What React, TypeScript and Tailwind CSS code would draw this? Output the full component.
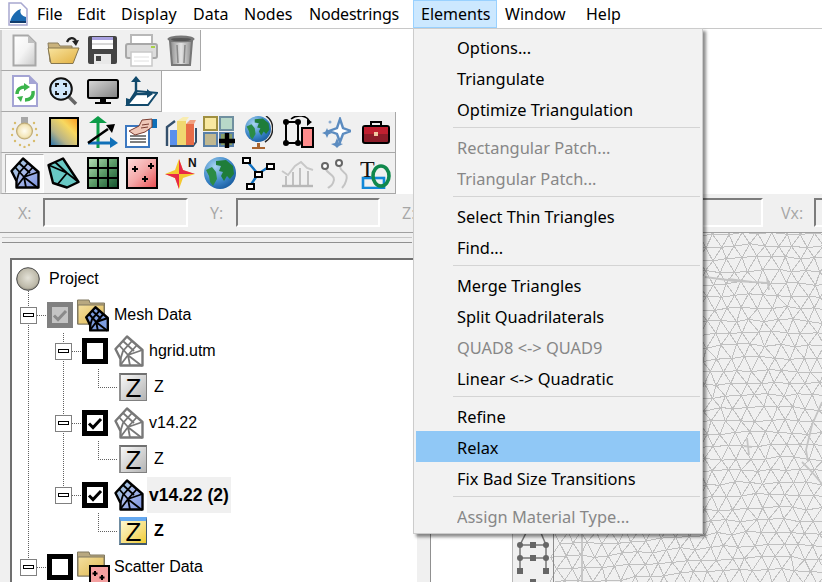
import { useMemo } from "react";
import type { ReactNode } from "react";

const menuBar = [
  { label: "File", w: "w-[40px]", track: "" },
  { label: "Edit", w: "w-[44px]", track: "" },
  { label: "Display", w: "w-[72px]", track: "tracking-[0.2px]" },
  { label: "Data", w: "w-[51px]", track: "" },
  { label: "Nodes", w: "w-[65px]", track: "" },
  { label: "Nodestrings", w: "w-[112px]", track: "tracking-[-0.2px]" },
];

type MenuEntry = { label?: string; disabled?: boolean; active?: boolean; sep?: boolean };

const elementsMenu: MenuEntry[] = [
  { label: "Options..." },
  { label: "Triangulate" },
  { label: "Optimize Triangulation" },
  { sep: true },
  { label: "Rectangular Patch...", disabled: true },
  { label: "Triangular Patch...", disabled: true },
  { sep: true },
  { label: "Select Thin Triangles" },
  { label: "Find..." },
  { sep: true },
  { label: "Merge Triangles" },
  { label: "Split Quadrilaterals" },
  { label: "QUAD8 <-> QUAD9", disabled: true },
  { label: "Linear <-> Quadratic" },
  { sep: true },
  { label: "Refine" },
  { label: "Relax", active: true },
  { label: "Fix Bad Size Transitions" },
  { sep: true },
  { label: "Assign Material Type...", disabled: true },
];

function Icon({ w, h, children }: { w: number; h: number; children: ReactNode }) {
  return (
    <svg width={w} height={h} viewBox={`0 0 ${w} ${h}`} className="block shrink-0">
      {children}
    </svg>
  );
}

function Grad({ id, stops, dir = "v" }: { id: string; stops: string[]; dir?: "v" | "h" | "d" | "u" }) {
  const c = { v: [0, 0, 0, 1], h: [0, 0, 1, 0], d: [0, 0, 1, 1], u: [0, 1, 1, 0] }[dir];
  return (
    <linearGradient id={id} x1={c[0]} y1={c[1]} x2={c[2]} y2={c[3]}>
      {stops.map((s, i) => (
        <stop key={i} offset={i / (stops.length - 1)} stopColor={s} />
      ))}
    </linearGradient>
  );
}

function MeshPaths({ fill, stroke, sw }: { fill: string; stroke: string; sw: number }) {
  return (
    <>
      <path d="M1.500 14L13 1.500 28.500 15V30.500H6.500V24Z" fill={fill} stroke={stroke} strokeWidth={sw} strokeLinejoin="round" />
      <path
        d="M9 6L20 16M5 10L14 20M18 6L9 16 6.500 24M23 10L14 20 6.500 30M14 20L16 30.500M14 20L28.500 15M15 21L28 31"
        fill="none"
        stroke={stroke}
        strokeWidth={sw - 0.6}
      />
    </>
  );
}

function MeshShape({ id, stroke, stops, sw = 2.4 }: { id: string; stroke: string; stops: string[]; sw?: number }) {
  return (
    <Icon w={30} h={32}>
      <defs>
        <Grad id={id} stops={stops} dir="d" />
      </defs>
      <MeshPaths fill={`url(#${id})`} stroke={stroke} sw={sw} />
    </Icon>
  );
}

function GlobeBall({ id, r }: { id: string; r: number }) {
  return (
    <g transform={`scale(${r / 16})`}>
      <defs>
        <radialGradient id={id} cx="0.35" cy="0.3" r="0.8">
          <stop offset="0" stopColor="#a8d4f0" />
          <stop offset="0.6" stopColor="#3c86c8" />
          <stop offset="1" stopColor="#14569a" />
        </radialGradient>
      </defs>
      <circle cx="16" cy="16" r="16" fill={`url(#${id})`} />
      <path d="M12 4L22 3 29 9 30 17 26 22 23 19 20 24 17 19 19 15 15 14 17 9 12 8Z" fill="#1f7d3a" />
      <path d="M2 13L8 10 12 15 13 22 9 29 6 25 5 19Z" fill="#2b8c46" />
    </g>
  );
}

const icons: Record<string, ReactNode> = {
  new: (
    <Icon w={25} h={33}>
      <defs>
        <Grad id="nw" stops={["#ffffff", "#f4f4f4", "#c8c8c8"]} dir="d" />
      </defs>
      <path d="M1.500 1.500H16L23.500 9V31.500H1.500Z" fill="url(#nw)" stroke="#a8a8a8" strokeWidth="2" />
      <path d="M16 1.500V9H23.500Z" fill="#c0c0c0" />
    </Icon>
  ),
  open: (
    <Icon w={33} h={30}>
      <defs>
        <Grad id="op" stops={["#f8e4a0", "#e2b040"]} dir="d" />
      </defs>
      <path d="M1 8H11L13 11H25V27H3Z" fill="#c9b27c" stroke="#8a7c5c" />
      <path d="M1 13H32L26 28.500H4Z" fill="url(#op)" stroke="#85764f" />
      <path d="M20 7C22 2 27 2 29 6" fill="none" stroke="#222" strokeWidth="2.200" />
      <path d="M25 6L32 5 29 11Z" fill="#222" />
    </Icon>
  ),
  save: (
    <Icon w={29} h={29}>
      <rect x="0" y="0" width="29" height="28" rx="2" fill="#444" />
      <rect x="4" y="1" width="21" height="12" fill="#fff" />
      <rect x="4" y="1" width="21" height="3" fill="#a8a0e0" />
      <rect x="4" y="7" width="21" height="2" fill="#d8d8d8" />
      <rect x="6" y="18" width="17" height="10" fill="#e8e8e8" />
      <rect x="8" y="20" width="5" height="5" fill="#444" />
    </Icon>
  ),
  print: (
    <Icon w={33} h={33}>
      <rect x="6" y="1" width="21" height="10" fill="#fff" stroke="#b8b8b8" strokeWidth="2" />
      <rect x="1" y="10" width="31" height="14" rx="2" fill="#dcdcdc" stroke="#a8a8a8" strokeWidth="2" />
      <rect x="26" y="12" width="4" height="2" fill="#a8d048" />
      <rect x="6" y="18" width="21" height="14" fill="#fff" stroke="#c8c8c8" strokeWidth="1.500" />
      <path d="M9 23H24M9 27H24" stroke="#e0e0e0" />
    </Icon>
  ),
  trash: (
    <Icon w={28} h={33}>
      <defs>
        <Grad id="tr" stops={["#8a8a8a", "#e4e4e4", "#8c8c8c"]} dir="h" />
      </defs>
      <path d="M3 7H25L23 31H5Z" fill="url(#tr)" stroke="#777" strokeWidth="2" />
      <ellipse cx="14" cy="5" rx="13.500" ry="3.500" fill="#777" />
      <ellipse cx="14" cy="5.500" rx="10" ry="1.600" fill="#555" />
      <path d="M10 11L11 29M18 11L17 29" stroke="#888" strokeWidth="1.500" />
    </Icon>
  ),
  refresh: (
    <Icon w={26} h={32}>
      <path d="M1 1H17L25 9V31H1Z" fill="#fff" stroke="#a4a4d4" strokeWidth="2" />
      <path d="M17 1V9H25Z" fill="#a4a4d4" />
      <path d="M5 19C5 14 9 12 13 12" fill="none" stroke="#3cb44c" strokeWidth="3.400" />
      <path d="M12 8L18 12 12 16Z" fill="#3cb44c" />
      <path d="M21 16C22 22 18 25 13 25" fill="none" stroke="#3cb44c" strokeWidth="3.400" />
      <path d="M9 27L5 22 11 21Z" fill="#3cb44c" />
    </Icon>
  ),
  zoom: (
    <Icon w={29} h={29}>
      <path d="M19 19L27 27" stroke="#666" strokeWidth="3.600" />
      <circle cx="12" cy="12" r="10.800" fill="#cfe6fb" stroke="#111" strokeWidth="2" />
      <path d="M7 10V7H10M14 7H17V10M17 14V17H14M10 17H7V14" fill="none" stroke="#111" strokeWidth="1.800" />
    </Icon>
  ),
  monitor: (
    <Icon w={32} h={25}>
      <defs>
        <Grad id="mo" stops={["#d8d8d8", "#808080"]} dir="d" />
      </defs>
      <rect x="1" y="1" width="30" height="18" rx="1.500" fill="url(#mo)" stroke="#000" strokeWidth="2" />
      <rect x="13" y="20" width="6" height="3" fill="#000" />
      <rect x="8" y="23" width="16" height="2" fill="#000" />
    </Icon>
  ),
  plane: (
    <Icon w={33} h={31}>
      <path d="M11 15L32 17 23 29 2 29Z" fill="#fff" stroke="#124a6c" strokeWidth="2" />
      <path d="M11 3V18L2 29" fill="none" stroke="#124a6c" strokeWidth="2.400" />
      <path d="M11 18H24" stroke="#124a6c" strokeWidth="2.400" />
      <path d="M6 6L11 0 16 6ZM22 13L28 18 22 22ZM1 22L7 24 1 30Z" fill="#124a6c" />
    </Icon>
  ),
  bulb: (
    <Icon w={27} h={31}>
      <defs>
        <radialGradient id="bl" cx="0.5" cy="0.5" r="0.55">
          <stop offset="0" stopColor="#fffdf2" />
          <stop offset="0.7" stopColor="#f4e6b8" />
          <stop offset="1" stopColor="#b8a878" />
        </radialGradient>
      </defs>
      <rect x="10" y="0" width="7" height="7" fill="#a8a8a8" />
      <circle cx="13.500" cy="14" r="8" fill="url(#bl)" stroke="#c0aa70" />
      {[
        [2, 12], [25, 12], [1, 18], [26, 18], [4, 6], [23, 6], [4, 24], [23, 24], [9, 28], [18, 28], [13.5, 30],
      ].map(([x, y], i) => (
        <circle key={i} cx={x} cy={y} r="1.200" fill="#d8bc6c" />
      ))}
    </Icon>
  ),
  gradient: (
    <Icon w={30} h={30}>
      <defs>
        <Grad id="gr" stops={["#1f6fb0", "#b8b488", "#f8d860", "#f8981c"]} dir="u" />
      </defs>
      <rect x="1" y="1" width="28" height="28" fill="url(#gr)" stroke="#000" strokeWidth="2" />
    </Icon>
  ),
  axes: (
    <Icon w={31} h={32}>
      <path d="M11 6V32" stroke="#0c9c48" strokeWidth="3" />
      <path d="M2 7L11 0 20 7Z" fill="#0c9c48" />
      <path d="M1 27H24" stroke="#1070b8" strokeWidth="3" />
      <path d="M23 21L31 27 23 32Z" fill="#1070b8" />
      <path d="M1 27L21 13" stroke="#000" strokeWidth="2.600" />
      <path d="M19 9L28 8 25 17Z" fill="#000" />
    </Icon>
  ),
  form: (
    <Icon w={33} h={31}>
      <rect x="1" y="9" width="23" height="21" fill="#fff" stroke="#3c78c0" strokeWidth="2" />
      <path d="M5 19H21M5 22H21M5 25H21" stroke="#555" strokeWidth="1.600" />
      <rect x="27" y="2" width="5" height="9" fill="#1070b8" />
      <path d="M4 14L14 9 17 3 27 2 27 10 20 15 10 18Z" fill="#f0c8b8" stroke="#7a3c30" />
      <path d="M17 8L24 7M16 11L23 10" stroke="#7a3c30" />
    </Icon>
  ),
  bars: (
    <Icon w={33} h={32}>
      <path d="M3 30V11L11 5" fill="none" stroke="#34506c" strokeWidth="2.400" />
      <path d="M6 30H29L32 26V12" fill="none" stroke="#34506c" strokeWidth="2" />
      <rect x="6" y="14" width="7" height="15" fill="#5a90ec" />
      <rect x="13" y="5" width="9" height="24" fill="#f0d870" />
      <path d="M13 5L19 1H25L22 5Z" fill="#f8ecb0" />
      <rect x="22" y="8" width="8" height="21" fill="#e86c48" />
      <path d="M22 8L26 4H32L30 8Z" fill="#f0a080" />
    </Icon>
  ),
  tiles: (
    <Icon w={33} h={32}>
      <rect x="1" y="1" width="13" height="13" fill="#f8e8a0" stroke="#a09040" strokeWidth="2" />
      <rect x="17" y="1" width="13" height="13" fill="#b8d8c8" stroke="#7090a0" strokeWidth="2" />
      <rect x="1" y="17" width="13" height="13" fill="#c0b890" stroke="#5880a8" strokeWidth="2" />
      <rect x="17" y="17" width="13" height="13" fill="#88a068" stroke="#5880a8" strokeWidth="2" />
      <path d="M24 17V32M16 25H32" stroke="#000" strokeWidth="4.400" />
    </Icon>
  ),
  desk: (
    <Icon w={28} h={33}>
      <GlobeBall id="gl1" r={13} />
      <path d="M21 0C30 6 30 20 20 26" fill="none" stroke="#222" strokeWidth="1.500" />
      <path d="M7 31H20V33H7ZM12 27H15V31H12Z" fill="#a86430" />
    </Icon>
  ),
  nodestring: (
    <Icon w={33} h={32}>
      <path d="M5 6H17M5 27H17M5 6V27M17 6V27" stroke="#000" strokeWidth="2" />
      <path d="M6 2C12 -3 22 -2 25 5" transform="translate(4 1)" fill="none" stroke="#000" strokeWidth="1.600" />
      <path d="M26 3L31 6 26 10Z" fill="#000" />
      <rect x="21" y="12" width="11" height="19" fill="#ff8c8c" stroke="#000" strokeWidth="2" />
      {[[5, 6], [17, 6], [5, 27], [17, 27]].map(([x, y], i) => (
        <circle key={i} cx={x} cy={y} r="3" fill="#000" />
      ))}
    </Icon>
  ),
  stars: (
    <Icon w={29} h={31}>
      <path d="M18 2L21 11 29 14 21 17 18 25 15 17 7 14 15 11Z" fill="#fff" stroke="#5c8cc0" strokeWidth="2.400" />
      <path d="M5 11L6.500 14.500 10 16 6.500 17.500 5 21 3.500 17.500 0 16 3.500 14.500Z" fill="#5c8cc0" />
      <path d="M15 21L17 26 21 27 17 29 15 31 13 29 9 27 13 26Z" fill="#5c8cc0" />
      <circle cx="8" cy="5" r="1.500" fill="#8cacd0" />
    </Icon>
  ),
  toolbox: (
    <Icon w={28} h={24}>
      <path d="M9 6V2H19V6" fill="none" stroke="#000" strokeWidth="2" />
      <rect x="1" y="6" width="26" height="17" rx="2" fill="#8c1c28" stroke="#000" strokeWidth="2" />
      <rect x="2" y="7" width="24" height="7" fill="#c02030" />
      <rect x="12" y="12" width="4" height="4" fill="#f0c8a0" />
    </Icon>
  ),
  mesh: <MeshShape id="tb-mesh" stroke="#000" stops={["#9cc8d8", "#a8b8e8", "#7c94e0"]} />,
  quad: (
    <Icon w={33} h={32}>
      <path d="M1.500 8L16 1.500 31.500 25 20 30.500 6 26Z" fill="#68c8c4" stroke="#000" strokeWidth="2.400" strokeLinejoin="round" />
      <path d="M1.500 8L20 16 31.500 25M20 16L10 28M8 5L20 16" fill="none" stroke="#000" strokeWidth="1.800" />
    </Icon>
  ),
  grid: (
    <Icon w={32} h={32}>
      <defs>
        <Grad id="gd" stops={["#b8e0b8", "#5c9c68", "#10502c"]} dir="d" />
      </defs>
      <rect x="1" y="1" width="30" height="30" fill="url(#gd)" stroke="#000" strokeWidth="2" />
      <path d="M11 1V31M21 1V31M1 11H31M1 21H31" stroke="#000" strokeWidth="2" />
    </Icon>
  ),
  scatter: (
    <Icon w={32} h={32}>
      <defs>
        <Grad id="sc" stops={["#fcdcdc", "#f4a8a8", "#e84c50"]} dir="d" />
      </defs>
      <rect x="1" y="1" width="30" height="30" fill="url(#sc)" stroke="#000" strokeWidth="2" />
      <path d="M9 9V15M6 12H12M25 6V12M22 9H28M19 19V25M16 22H22" stroke="#000" strokeWidth="2" />
    </Icon>
  ),
  north: (
    <Icon w={32} h={32}>
      <path d="M14 2L18 13 30 17 18 21 14 32 10 21 0 17 10 13Z" fill="#f4c830" />
      <path d="M14 2L14 17 30 17 18 13ZM14 32L14 17 0 17 10 21Z" fill="#e82848" />
      <text x="23" y="10" fontFamily="Liberation Sans, sans-serif" fontWeight="700" fontSize="12" fill="#111">
        N
      </text>
    </Icon>
  ),
  globe: (
    <Icon w={32} h={32}>
      <GlobeBall id="gl2" r={16} />
    </Icon>
  ),
  branch: (
    <Icon w={33} h={33}>
      <path d="M5 4L16 17 28 9M16 17L8 29" fill="none" stroke="#1070c0" strokeWidth="2.400" />
      {[[1, 1], [25, 7], [13, 15], [5, 27]].map(([x, y], i) => (
        <rect key={i} x={x} y={y} width="7" height="5" fill="#fff" stroke="#000" strokeWidth="2" />
      ))}
    </Icon>
  ),
  chart: (
    <Icon w={33} h={30}>
      <path d="M1 13L7 17 14 8 20 4 26 10 32 12" fill="none" stroke="#c8c8c8" strokeWidth="2" />
      <path d="M5 18V28M12 14V28M19 10V28M27 13V28" stroke="#b0b0b0" strokeWidth="1.500" />
      <path d="M1 28H32" stroke="#b8b8b8" strokeWidth="2.400" />
    </Icon>
  ),
  curves: (
    <Icon w={33} h={32}>
      <path d="M5 11C8 18 17 18 13 26 12 29 9 30 8 31M19 8C22 18 29 14 26 24 25 28 23 30 22 31" fill="none" stroke="#c4c4c4" strokeWidth="2" />
      <circle cx="5" cy="9" r="3" fill="#fff" stroke="#666" strokeWidth="2" />
      <circle cx="19" cy="6" r="3" fill="#fff" stroke="#666" strokeWidth="2" />
    </Icon>
  ),
  label: (
    <Icon w={32} h={32}>
      <rect x="3" y="21" width="21" height="10" fill="none" stroke="#1088d8" strokeWidth="2.600" />
      <text x="0" y="20" fontFamily="Liberation Serif, serif" fontSize="24" fill="#111">
        T
      </text>
      <ellipse cx="21" cy="19" rx="8" ry="10" fill="none" stroke="#10884c" strokeWidth="3.600" />
    </Icon>
  ),
};

const rows: { keys: string[]; selected?: boolean }[] = [
  { keys: ["new", "open", "save", "print", "trash"] },
  { keys: ["refresh", "zoom", "monitor", "plane"] },
  { keys: ["bulb", "gradient", "axes", "form", "bars", "tiles", "desk", "nodestring", "stars", "toolbox"] },
  { keys: ["mesh", "quad", "grid", "scatter", "north", "globe", "branch", "chart", "curves", "label"], selected: true },
];

function Toolbar({ keys, selected }: { keys: string[]; selected?: boolean }) {
  return (
    <div className="flex h-[41px] w-fit items-center border-r border-b border-l-2 border-[#a8a8a8] border-l-[#d0d0d0] bg-[#f0f0f0] pl-[3px]">
      {keys.map((k, i) => (
        <div
          key={k}
          className={
            selected && i === 0
              ? "flex h-[39px] w-[39px] items-center justify-center border border-[#b0b0b0] border-r-white border-b-white bg-[#fbfbfb]"
              : "flex h-[39px] w-[39px] items-center justify-center"
          }
        >
          {icons[k]}
        </div>
      ))}
    </div>
  );
}

function CoordField({ label, boxW, pad, inputW }: { label: string; boxW: string; pad: string; inputW: string }) {
  return (
    <>
      <div className={`${boxW} ${pad} shrink-0 font-['Open_Sans',sans-serif] text-[16px] text-[#a6a6a6]`}>{label}</div>
      <div className={`${inputW} h-[29px] shrink-0 border-2 border-[#7c7c7c] border-r-white border-b-white bg-[#f0f0f0]`} />
    </>
  );
}

type GuideKind = "v" | "blank" | "expMid" | "expEnd" | "expFirst" | "leaf";

function Guide({ kind }: { kind: GuideKind }) {
  const dot = { stroke: "#606060", strokeDasharray: "1 1", shapeRendering: "crispEdges" as const };
  return (
    <svg width={35} height={36} viewBox="0 0 35 36" className="block shrink-0 overflow-visible">
      {(kind === "v" || kind === "expMid") && <path d="M16.500 0V36" {...dot} />}
      {kind === "expFirst" && <path d="M16.500 -6V36" {...dot} />}
      {kind === "expEnd" && <path d="M16.500 0V10" {...dot} />}
      {kind === "leaf" && <path d="M16.500 0V18.500H35" fill="none" {...dot} />}
      {kind.startsWith("exp") && (
        <>
          <path d="M25 18.500H35" {...dot} />
          <rect x="8.500" y="10.500" width="16" height="16" fill="#fff" stroke="#808080" />
          <rect x="11.500" y="16.500" width="10" height="3" fill="#fff" stroke="#000" />
        </>
      )}
    </svg>
  );
}

function Check({ checked, gray }: { checked?: boolean; gray?: boolean }) {
  return (
    <div
      className={
        gray
          ? "flex h-[26px] w-[26px] shrink-0 items-center justify-center border-[5px] border-[#808080] bg-[#c4c4c4]"
          : "flex h-[26px] w-[26px] shrink-0 items-center justify-center border-[5px] border-black bg-white"
      }
    >
      {checked && (
        <svg width={16} height={16} viewBox="0 0 16 16">
          <path d="M2 8.500L6 12.500 14 4" fill="none" stroke={gray ? "#8a8a8a" : "#000"} strokeWidth="3" />
        </svg>
      )}
    </div>
  );
}

function ZIcon({ active }: { active?: boolean }) {
  return (
    <div
      className={
        active
          ? "ml-[2px] flex h-[28px] w-[28px] shrink-0 items-center justify-center border-t-[4px] border-r border-b-2 border-l-2 border-t-[#64a8f0] border-r-[#40586c] border-b-[#40586c] border-l-[#708ca0] bg-linear-to-br from-[#fff8d0] to-[#f0cc20] font-['Liberation_Sans',sans-serif] text-[26px] leading-none text-black"
          : "ml-[2px] flex h-[28px] w-[28px] shrink-0 items-center justify-center border-t-2 border-r border-b border-l-2 border-t-[#707070] border-r-[#808080] border-b-[#808080] border-l-[#909090] bg-linear-to-br from-[#f8f8f8] to-[#b4b4b4] font-['Liberation_Sans',sans-serif] text-[26px] leading-none text-black"
      }
    >
      Z
    </div>
  );
}

function FolderIcon({ children }: { children: ReactNode }) {
  return (
    <svg width={32} height={32} viewBox="0 0 32 32" className="block shrink-0 overflow-visible">
      <defs>
        <linearGradient id="fld" x1="0" y1="0" x2="1" y2="1">
          <stop offset="0" stopColor="#f4e0a0" />
          <stop offset="1" stopColor="#e0b850" />
        </linearGradient>
      </defs>
      <path d="M0.500 1H12L13 4H27.500V25H0.500Z" fill="#b8a880" stroke="#807860" />
      <rect x="1" y="6" width="26" height="19" fill="url(#fld)" stroke="#807860" />
      {children}
    </svg>
  );
}

function TreeRow({ guides, children }: { guides: GuideKind[]; children: ReactNode }) {
  return (
    <div className="flex h-9 items-center">
      {guides.map((g, i) => (
        <Guide key={i} kind={g} />
      ))}
      {children}
    </div>
  );
}

function buildMesh(x0: number, x1: number, y0: number, y1: number, stepX: number, stepY: number, seed: number) {
  let s = seed;
  const rnd = () => {
    s = (s * 1664525 + 1013904223) % 4294967296;
    return s / 4294967296;
  };
  const pts: [number, number][][] = [];
  for (let r = 0; y0 + r * stepY < y1; r++) {
    const line: [number, number][] = [];
    for (let c = 0; x0 + c * stepX < x1; c++) {
      const bx = x0 + c * stepX + (r % 2) * (stepX / 2);
      const by = y0 + r * stepY;
      line.push([
        bx + Math.sin(by / 60) * 4 + (rnd() - 0.5) * 3.5,
        by + Math.sin(bx / 70) * 6 + (rnd() - 0.5) * 3.5,
      ]);
    }
    pts.push(line);
  }
  let d = "";
  const seg = (a: [number, number], b: [number, number]) => {
    d += `M${a[0].toFixed(1)} ${a[1].toFixed(1)}L${b[0].toFixed(1)} ${b[1].toFixed(1)}`;
  };
  pts.forEach((line, r) => {
    line.forEach((p, c) => {
      if (line[c + 1]) seg(p, line[c + 1]);
      const next = pts[r + 1];
      if (!next) return;
      const off = r % 2;
      if (next[c + off - 1]) seg(p, next[c + off - 1]);
      if (next[c + off]) seg(p, next[c + off]);
    });
  });
  return d;
}

function Canvas() {
  const mesh = useMemo(() => buildMesh(550, 835, 226, 595, 14.5, 12.5, 7), []);
  return (
    <svg width={392} height={349} viewBox="430 233 392 349" className="block shrink-0">
      <rect x="430" y="233" width="392" height="349" fill="#fff" />
      <rect x="430" y="233" width="1" height="349" fill="#909090" />
      <rect x="513" y="233" width="40" height="349" fill="#f0f0f0" />
      <path d="M512.500 233V582" stroke="#b8b8b8" />
      <path d="M526 533L520 545V571M541 533L546 545V571M520 545H546M520 558H546" fill="none" stroke="#777" strokeWidth="1.500" />
      {[[520, 545], [546, 545], [520, 558], [546, 558]].map(([x, y], i) => (
        <circle key={i} cx={x} cy={y} r="3" fill="#666" />
      ))}
      {[[533, 545], [533, 558], [520, 571], [546, 571], [533, 582]].map(([x, y], i) => (
        <rect key={i} x={x - 3} y={y - 3} width="6" height="6" fill="#666" />
      ))}
      <rect x="553" y="233" width="269" height="349" fill="#f0f0f0" />
      <path d={mesh} fill="none" stroke="#c0c0c0" shapeRendering="crispEdges" />
      {/* denser streaks of the mesh */}
      <path
        d="M705 277L735 281 770 283M728 279L752 282M767 278L769 290M747 438L749 455M744 446L752 447M822 402L812 425 806 450 808 462M802 462L812 472 822 484M582 533V582"
        fill="none"
        stroke="#c4c4c4"
        strokeWidth="1.800"
      />
      <path d="M553.500 233V582" stroke="#8c8c8c" />
    </svg>
  );
}

export default function App() {
  const uiFont = "font-['Noto_Sans',sans-serif]";
  return (
    <div className="relative h-[582px] w-[822px] overflow-hidden bg-white">
      {/* Menu bar */}
      <div className={`flex h-[29px] border-b border-[#c8c8c8] bg-white text-[16px] text-black ${uiFont}`}>
        <div className="flex w-[29px] shrink-0 items-start pt-[2px] pl-[8px]">
          <svg width={20} height={24} viewBox="0 0 20 24">
            <path d="M1 1H13L19 7V23H1Z" fill="#fff" stroke="#a8a8d0" strokeWidth="1.500" />
            <path d="M2 20C4 12 9 8 13 7 11 11 14 14 18 15L18 20Z" fill="#1c6ab0" />
            <rect x="2" y="19" width="16" height="2" fill="#123c6c" />
          </svg>
        </div>
        {menuBar.map((m) => (
          <div key={m.label} className={`${m.w} ${m.track} flex h-[28px] shrink-0 items-center pl-2`}>
            {m.label}
          </div>
        ))}
        <div className="flex h-[28px] w-[84px] shrink-0 items-center border border-[#99d1ff] bg-[#cce8ff] pl-[7px]">
          Elements
        </div>
        <div className="flex h-[28px] w-[81px] shrink-0 items-center pl-2">Window</div>
        <div className="flex h-[28px] shrink-0 items-center pl-[8px]">Help</div>
      </div>

      {/* Toolbars */}
      <div className="pt-px">
        {rows.map((r, i) => (
          <Toolbar key={i} keys={r.keys} selected={r.selected} />
        ))}
      </div>

      {/* Coordinate bar */}
      <div className="flex h-[39px] items-center overflow-hidden border-b border-[#a0a0a0] bg-[#f0f0f0] pb-[1px]">
        <CoordField label="X:" boxW="w-[43px]" pad="pl-[18px]" inputW="w-[145px]" />
        <CoordField label="Y:" boxW="w-[48px]" pad="pl-[22px]" inputW="w-[144px]" />
        <CoordField label="Z:" boxW="w-[49px]" pad="pl-[22px]" inputW="w-[144px]" />
        <CoordField label="" boxW="w-[46px]" pad="pl-0" inputW="w-[144px]" />
        <CoordField label="Vx:" boxW="w-[51px]" pad="pl-[18px]" inputW="w-[40px]" />
      </div>

      {/* Project explorer and graphics window */}
      <div className="flex h-[349px]">
        <div className="flex w-[430px] shrink-0 flex-col overflow-hidden bg-[#f0f0f0]">
          <div className="mt-[4px] ml-[2px] h-[6px] w-[410px] shrink-0 border-t border-b border-t-[#c8c8c8] border-b-[#909090]" />
          <div className="mt-[15px] ml-[10px] h-[400px] w-[407px] shrink-0 border-t-2 border-l-2 border-[#707070] bg-white pt-px font-['Liberation_Sans',sans-serif] text-[16px] text-black">
            <div className="flex h-9 items-center pl-[4px]">
              <svg width={24} height={24} viewBox="0 0 24 24" className="block shrink-0">
                <defs>
                  <radialGradient id="ball" cx="0.5" cy="0.45" r="0.55">
                    <stop offset="0" stopColor="#e4e2d8" />
                    <stop offset="0.8" stopColor="#bcb8a8" />
                    <stop offset="1" stopColor="#8c897c" />
                  </radialGradient>
                </defs>
                <circle cx="12" cy="12" r="11.300" fill="url(#ball)" stroke="#4c4c4c" />
              </svg>
              <span className="ml-[9px]">Project</span>
            </div>
            <TreeRow guides={["expFirst"]}>
              <Check checked gray />
              <div className="ml-[4px]">
                <FolderIcon>
                  <g transform="translate(8 7) scale(0.8)">
                    <MeshPaths fill="#7c9ce0" stroke="#000" sw={3} />
                  </g>
                </FolderIcon>
              </div>
              <span className="ml-[5px]">Mesh Data</span>
            </TreeRow>
            <TreeRow guides={["v", "expMid"]}>
              <Check />
              <div className="ml-[6px]">
                <MeshShape id="m1" stroke="#787878" stops={["#ffffff", "#ffffff"]} />
              </div>
              <span className="ml-[5px]">hgrid.utm</span>
            </TreeRow>
            <TreeRow guides={["v", "v", "leaf"]}>
              <ZIcon />
              <span className="ml-[7px]">Z</span>
            </TreeRow>
            <TreeRow guides={["v", "expMid"]}>
              <Check checked />
              <div className="ml-[6px]">
                <MeshShape id="m2" stroke="#787878" stops={["#ffffff", "#ffffff"]} />
              </div>
              <span className="ml-[5px]">v14.22</span>
            </TreeRow>
            <TreeRow guides={["v", "v", "leaf"]}>
              <ZIcon />
              <span className="ml-[7px]">Z</span>
            </TreeRow>
            <TreeRow guides={["v", "expEnd"]}>
              <Check checked />
              <div className="ml-[6px]">
                <MeshShape id="m3" stroke="#000" stops={["#9cc8d8", "#a8b8e8", "#7c94e0"]} />
              </div>
              <span className="ml-[3px] flex h-9 items-center bg-[#f0f0f0] px-[2px] text-[17.5px] font-bold">v14.22 (2)</span>
            </TreeRow>
            <TreeRow guides={["v", "blank", "leaf"]}>
              <ZIcon active />
              <span className="ml-[7px] text-[16px] font-bold">Z</span>
            </TreeRow>
            <TreeRow guides={["expEnd"]}>
              <Check />
              <div className="ml-[4px]">
                <FolderIcon>
                  <rect x="13" y="15" width="19" height="17" fill="#f4a0a0" stroke="#000" strokeWidth="2" />
                  <path d="M18 20V25M15.500 22.500H20.500M25 24V29M22.500 26.500H27.500" stroke="#000" strokeWidth="2" />
                </FolderIcon>
              </div>
              <span className="ml-[5px]">Scatter Data</span>
            </TreeRow>
          </div>
        </div>
        <Canvas />
      </div>

      {/* Elements menu */}
      <div className={`absolute top-[28px] left-[413px] w-[290px] border border-[#cccccc] bg-[#f2f2f2] p-[2px] text-[16.4px] shadow-[3px_3px_3px_rgba(0,0,0,0.45)] ${uiFont}`}>
        {elementsMenu.map((item, i) =>
          item.sep ? (
            <div key={i} className="flex h-[7px] items-center pl-[37px]">
              <div className="h-px w-full bg-[#d4d4d4]" />
            </div>
          ) : (
            <div
              key={i}
              className={
                item.active
                  ? "flex h-[31px] items-center bg-[#90c8f6] pt-[4px] pl-[41px] text-black"
                  : item.disabled
                    ? "flex h-[31px] items-center pt-[4px] pl-[41px] text-[#6d6d6d] opacity-80"
                    : "flex h-[31px] items-center pt-[4px] pl-[41px] text-black"
              }
            >
              {item.label}
            </div>
          ),
        )}
      </div>
    </div>
  );
}
